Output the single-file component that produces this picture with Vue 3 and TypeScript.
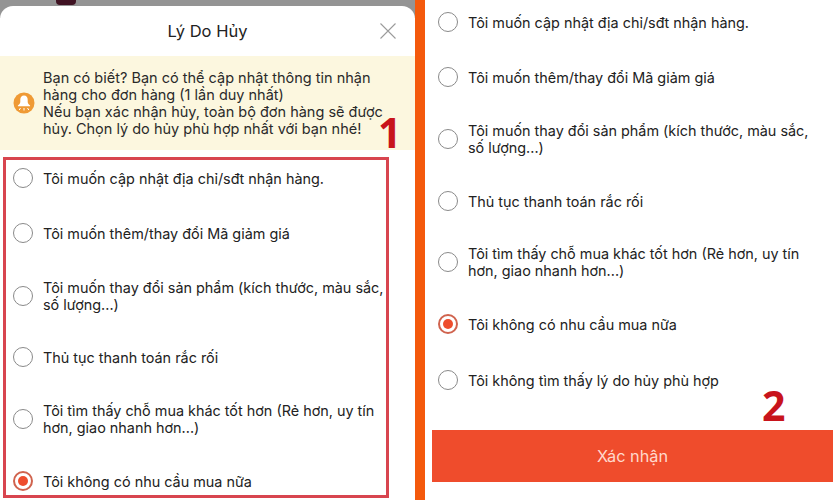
<script setup lang="ts">
interface Reason { id: number; text: string }
const reasons: Reason[] = [
  { id: 1, text: 'Tôi muốn cập nhật địa chỉ/sđt nhận hàng.' },
  { id: 2, text: 'Tôi muốn thêm/thay đổi Mã giảm giá' },
  { id: 3, text: 'Tôi muốn thay đổi sản phẩm (kích thước, màu sắc, số lượng...)' },
  { id: 4, text: 'Thủ tục thanh toán rắc rối' },
  { id: 5, text: 'Tôi tìm thấy chỗ mua khác tốt hơn (Rẻ hơn, uy tín hơn, giao nhanh hơn...)' },
  { id: 6, text: 'Tôi không có nhu cầu mua nữa' },
]
const rightReasons: Reason[] = [...reasons, { id: 7, text: 'Tôi không tìm thấy lý do hủy phù hợp' }]
const selected = 6
</script>

<template>
  <div class="scene">
    <section class="left">
      <div class="backdrop"><span class="bottle"></span></div>
      <div class="modal">
        <header class="head">
          <h1>Lý Do Hủy</h1>
          <svg class="close" viewBox="0 0 16 16" width="16" height="16" aria-label="Đóng">
            <path d="M0.5 0.5L15.5 15.5M15.5 0.5L0.5 15.5" stroke="#9b9b9b" stroke-width="1.1" fill="none" />
          </svg>
        </header>
        <div class="notice">
          <svg class="bell" viewBox="0 0 22 22" width="22" height="22">
            <circle cx="11" cy="11" r="10.5" fill="#ef9a35" />
            <path d="M11 3.500c-2.400 0-3.700 1.800-3.700 4.200v2.300c0 1.500-1.300 2.500-2.400 3.400v.8h12.200v-.8c-1.100-.9-2.400-1.900-2.400-3.400V7.700c0-2.400-1.300-4.200-3.700-4.200z" fill="#fff" />
            <path d="M7.500 16l-1.300 2M11 16v2.500M14.500 16l1.300 2" stroke="#fff" stroke-width="1" fill="none" />
          </svg>
          <p>Bạn có biết? Bạn có thể cập nhật thông tin nhận hàng cho đơn hàng (1 lần duy nhất)<br />Nếu bạn xác nhận hủy, toàn bộ đơn hàng sẽ được hủy. Chọn lý do hủy phù hợp nhất với bạn nhé!</p>
        </div>
        <ul class="list boxed">
          <li v-for="r in reasons" :key="r.id" class="row">
            <span class="radio" :class="{ on: r.id === selected }"></span>
            <span class="label">{{ r.text }}</span>
          </li>
        </ul>
      </div>
      <span class="mark mark-one">1</span>
    </section>

    <div class="divider"></div>

    <section class="right">
      <ul class="list plain">
        <li v-for="r in rightReasons" :key="r.id" class="row">
          <span class="radio" :class="{ on: r.id === selected }"></span>
          <span class="label">{{ r.text }}</span>
        </li>
      </ul>
      <button class="confirm" type="button">Xác nhận</button>
      <span class="mark mark-two">2</span>
    </section>
  </div>
</template>

<style>
html, body { margin: 0; background: #fff; }
</style>

<style scoped>
.scene {
  position: relative;
  width: 840px;
  height: 500px;
  overflow: hidden;
  display: grid;
  grid-template-columns: 415px 10px 415px;
  background: #fff;
  font-family: Inter, "Liberation Sans", sans-serif;
  color: #222;
}
.left { position: relative; display: flex; flex-direction: column; background: #fff; }
.backdrop { height: 18px; margin-bottom: -12px; background: #949494; padding-left: 56px; }
.bottle { display: block; width: 20px; height: 5px; background: #3f1222; border-radius: 0 0 4px 4px; }
.modal { flex: 1; background: #fff; border-radius: 13px 13px 0 0; display: flex; flex-direction: column; position: relative; }
.head { height: 50px; display: flex; align-items: center; justify-content: center; position: relative; }
.head h1 { margin: 0; font-size: 16.5px; font-weight: 400; color: #222; }
.close { position: absolute; right: 19px; top: 17px; }
.notice { height: 94px; background: #fcf7df; display: flex; align-items: center; gap: 8px; padding: 0 20px 0 13px; box-sizing: border-box; }
.notice p { margin: 0; font-size: 14.5px; line-height: 17px; color: #2a2a2a; }
.bell { flex: none; }
.list { list-style: none; margin: 0; padding: 0; }
.boxed {
  margin: 7px 26px 0 3px;
  border: 3px solid #d8454f;
  height: 341px;
  box-sizing: border-box;
  padding: 1px 0 0 7px;
}
.row { display: flex; align-items: center; gap: 10px; height: 34px; }
.boxed .row:nth-child(2) { margin-top: 21px; }
.boxed .row:nth-child(3) { margin-top: 29px; }
.boxed .row:nth-child(4) { margin-top: 27px; }
.boxed .row:nth-child(5) { margin-top: 28px; }
.boxed .row:nth-child(6) { margin-top: 28px; }
.plain { padding: 5px 0 0 13px; width: 390px; box-sizing: border-box; }
.plain .row:nth-child(2) { margin-top: 21px; }
.plain .row:nth-child(3) { margin-top: 28px; }
.plain .row:nth-child(4) { margin-top: 28px; }
.plain .row:nth-child(5) { margin-top: 27px; }
.plain .row:nth-child(6) { margin-top: 28px; }
.plain .row:nth-child(7) { margin-top: 22px; }
.radio { flex: none; width: 20px; height: 20px; border: 1px solid #8a8a8a; border-radius: 50%; box-sizing: border-box; background: #fff; position: relative; }
.radio.on { border: 2px solid #d0634e; }
.radio.on::after { content: ""; position: absolute; inset: 3px; border-radius: 50%; background: #ee4d2d; }
.label { font-size: 14.4px; line-height: 17px; color: #222; }
.right { position: relative; background: #fff; }
.confirm {
  position: absolute;
  left: 7px;
  top: 430px;
  width: 401px;
  height: 52px;
  border: 0;
  background: #ef4c2c;
  color: #ffd9cc;
  font: 400 16.3px Inter, "Liberation Sans", sans-serif;
}
.divider { background: #f4590c; }
.mark { position: absolute; color: #c8141c; font-family: "Open Sans", sans-serif; font-weight: 700; font-size: 41px; line-height: 24px; }
.mark-one { left: 378px; top: 120px; }
.mark-two { left: 337px; top: 393px; }
</style>
